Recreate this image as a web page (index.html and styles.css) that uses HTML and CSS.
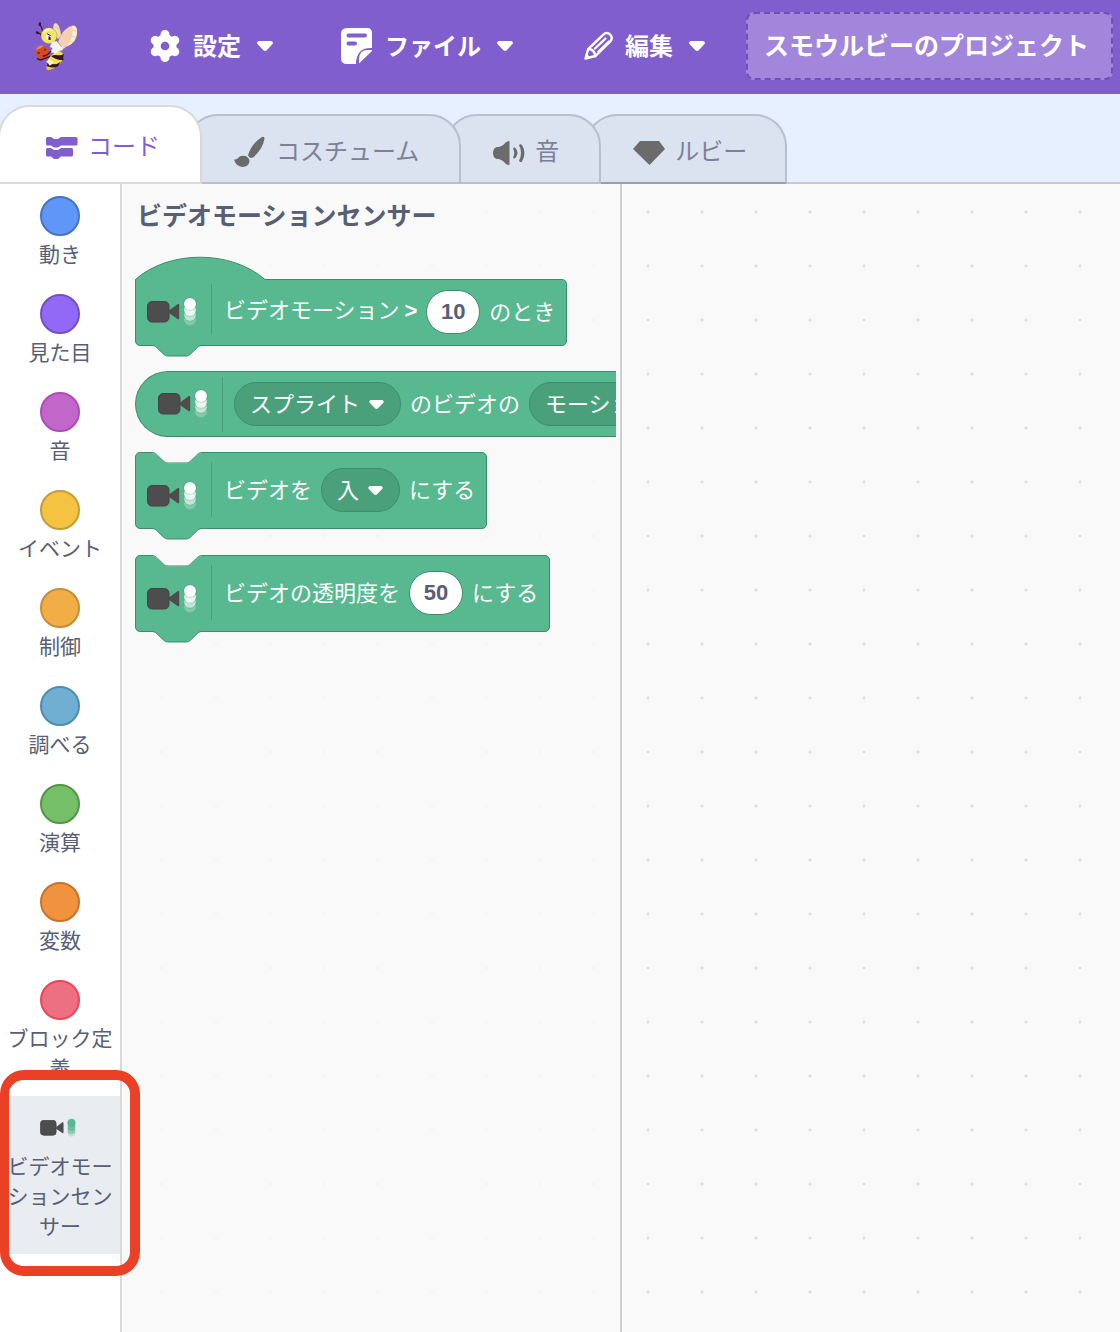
FILE: index.html
```html
<!DOCTYPE html>
<html lang="ja">
<head>
<meta charset="utf-8">
<meta name="viewport" content="width=device-width, initial-scale=1">
<title>スモウルビー</title>
<link rel="stylesheet" href="styles.css">
</head>
<body>
<svg class="defs" aria-hidden="true">
  <symbol id="caret" viewBox="0 0 16 11"><path d="M2.200 0h11.600c1.900 0 2.700 2 1.500 3.300l-5.600 5.900c-1 1-2.400 1-3.400 0L.7 3.300C-.5 2 .3 0 2.200 0z" fill="#fff"/></symbol>
  <symbol id="camera" viewBox="0 0 34 22"><rect x=".5" y=".5" width="21.500" height="20.500" rx="4.500" fill="#4d4d4d" stroke="#444"/><path d="M22 9.500l8.500-6.300c.8-.6 1.700-.1 1.700.7v13.300c0 .8-.9 1.300-1.700.7L22 12z" fill="#4d4d4d"/></symbol>
  <symbol id="trail" viewBox="0 0 14 30"><g fill="currentColor"><circle cx="7" cy="22.500" r="6" opacity=".25"/><circle cx="7" cy="18" r="6" opacity=".5"/><circle cx="7" cy="13" r="6" opacity=".75"/><circle cx="7" cy="7" r="6"/></g><g fill="none" stroke="#2f7f5e" stroke-opacity=".25" stroke-width=".8"><circle cx="7" cy="7" r="6.400"/><path d="M.8 14a6.300 6.300 0 0 0 12.400 0M.8 19a6.300 6.300 0 0 0 12.400 0"/></g></symbol>
  <symbol id="notch-top" viewBox="0 0 50 12"><path d="M0 0H50V1C47 1 46 2.400 44.600 3.700L39 9.100C37.600 10.500 36.300 11.500 34 11.500H16.500C14 11.500 12.400 10.500 11 9.100L5.400 3.700C4 2.400 3 1 0 1z" fill="#f9f9f9"/><path d="M0 .5C2.700.5 4 1.900 5.400 3.200L11 8.600C12.400 10 13.800 11 16.500 11H34C36.300 11 37.600 10 39 8.600L44.600 3.200C46 1.900 47.300.5 50 .5" fill="none" stroke="#3d8d6a"/></symbol>
  <symbol id="notch-bottom" viewBox="0 0 50 12"><path d="M0 0H50V.5C47.300.5 46 1.900 44.600 3.200L39 8.600C37.600 10 36.300 11 34 11H16.500C13.800 11 12.400 10 11 8.600L5.400 3.200C4 1.900 2.700.5 0 .5z" fill="#58b88f"/><path d="M0 .5C2.700.5 4 1.900 5.400 3.200L11 8.600C12.400 10 13.800 11 16.500 11H34C36.300 11 37.600 10 39 8.600L44.600 3.200C46 1.900 47.300.5 50 .5" fill="none" stroke="#3d8d6a"/></symbol>
</svg>

<header class="menu-bar">
  <svg class="logo" viewBox="0 0 192 192" role="img" aria-label="スモウルビー">
    <path d="M57 60Q56 42 47 32M52 64Q48 56 41 57" fill="none" stroke="#4a1d2c" stroke-width="4" stroke-linecap="round"/>
    <path d="M47 32l1-4M41 57l-2-2" stroke="#3b1422" stroke-width="7" stroke-linecap="round"/>
    <path d="M101 75C88 58 84 38 90 29C99 21 110 37 112 70z" fill="#f1dcc0" stroke="#8a6a58" stroke-width="1"/>
    <path d="M102 84C108 58 130 35 150 34C165 39 160 72 150 83L118 105z" fill="#f6cfb2" stroke="#9a7565" stroke-width="1"/>
    <path d="M144 37C158 34 162 46 157 66C151 85 141 93 128 97C143 77 149 60 144 37z" fill="#fbefd5"/>
    <path d="M145 48l13 4M143 67l13 3M137 82l10 3M89 38l18 7" stroke="#a78673" stroke-width="1"/>
    <circle cx="75" cy="65" r="24" fill="#f5e45d" stroke="#83672c" stroke-width="1"/>
    <path d="M60 48Q73 37 87 48Q72 48 60 59z" fill="#fff49a"/>
    <path d="M70 58Q82 62 82 76L71 78Q61 68 70 58z" fill="#fff"/>
    <path d="M74 66l6 4 0 8-7-1z" fill="#35131d"/>
    <path d="M69 59l11 6" stroke="#35131d" stroke-width="3"/>
    <path d="M97 112Q119 108 118 130Q111 158 73 169Q62 151 77 128z" fill="#f2dc54"/>
    <path d="M94 122Q111 127 119 119L118 139Q98 139 81 126z" fill="#351321"/>
    <path d="M70 145Q91 158 110 143L102 157Q87 164 69 157z" fill="#351321"/>
    <path d="M67 158Q83 168 91 161Q80 168 68 168z" fill="#e4c43d"/>
    <circle cx="54" cy="115" r="20" fill="#d54b23"/>
    <path d="M36 109Q38 92 60 95Q53 103 36 109z" fill="#ed8150"/>
    <circle cx="44" cy="117" r="4" fill="#8c2b1b"/><circle cx="63" cy="107" r="3" fill="#7c2419"/>
    <path d="M85 83L98 82L112 99L119 94L116 107L104 112L94 123L90 116L80 115L86 103L78 98z" fill="#f5f4ec" stroke="#ddd4cf" stroke-width="2"/>
    <path d="M80 112Q70 125 58 126M77 128L50 138L40 134" fill="none" stroke="#41151c" stroke-width="4" stroke-linecap="round"/>
    <path d="M66 143l12-8 4 6 8 1-5 8-8 5-5-7z" fill="#fff6a6"/>
  </svg>
  <nav class="menus" aria-label="メニュー">
    <button class="menu" type="button">
      <svg class="menu-icon" viewBox="0 0 32 36"><g stroke="#fff" stroke-width="9" stroke-linecap="round"><path d="M16 6.500V29.500M6.200 12.300L25.800 23.700M25.800 12.300L6.200 23.700"/></g><circle cx="16" cy="18" r="11.500" fill="#fff"/><circle cx="16" cy="18" r="4.300" fill="#805ecd"/></svg>
      <span>設定</span><svg class="caret"><use href="#caret"/></svg>
    </button>
    <button class="menu" type="button">
      <svg class="menu-icon" viewBox="0 0 32 36"><path d="M6 0H26Q31 0 31 5V20Q16 19 15 35V36H6Q0 36 0 30V6Q0 0 6 0z" fill="#fff"/><path d="M31 22V23L18 35.500V31Q18 22 27 22z" fill="#fff"/><path d="M7.500 7.500H24M7.500 15.500H14" stroke="#805ecd" stroke-width="4" stroke-linecap="round"/></svg>
      <span>ファイル</span><svg class="caret"><use href="#caret"/></svg>
    </button>
    <button class="menu" type="button">
      <svg class="menu-icon" viewBox="-1 0 32 36"><g fill="none" stroke="#fff" stroke-width="2.400" stroke-linejoin="round" stroke-linecap="round"><path d="M3.500 30.500L6.200 21L21.500 6.500Q25 3.500 28.300 6.800Q31.300 10 28.300 13.500L13.500 28z"/><path d="M6.500 21Q12 21 13.500 28M13 20.500L23.500 10.500M16.500 23.500L27 13.500M10 17.500L20 8"/></g><path d="M3 31l1.500-5.500 4 4z" fill="#fff"/></svg>
      <span>編集</span><svg class="caret"><use href="#caret"/></svg>
    </button>
  </nav>
  <input class="project-title" type="text" aria-label="プロジェクト名" value="スモウルビーのプロジェクト">
</header>

<div class="tabs" role="tablist">
  <button class="tab tab-selected" type="button" role="tab" aria-selected="true">
    <svg class="tab-icon" viewBox="0 0 32 32"><path d="M0 6.500Q0 5 1.500 5H5L8 7H12L15 5H30Q31.500 5 31.500 6.500V12Q31.500 13.500 30 13.500H15L12 15.500H8L5 13.500H1.500Q0 13.500 0 12zM0 17.500Q0 16 1.500 16H5L8 18H12L15 16H25.500Q27 16 27 17.500V23Q27 24.500 25.500 24.500H15L12 27H8L5 24.500H1.500Q0 24.500 0 23z" fill="#805ecd"/></svg>
    <span>コード</span>
  </button>
  <button class="tab" type="button" role="tab" aria-selected="false">
    <svg class="tab-icon" viewBox="0 0 32 32"><path d="M14 19.500Q17 8 28 1Q30.500 0 30.500 2.500Q29 13 19 21.500Q15.500 23 14 19.500zM0 23.500Q3 24 5 21Q7.500 19 11.500 20Q15.500 21.500 15.500 25.500Q14.500 30.500 8.500 31Q2 30.500 0 23.500z" fill="#6b6b6b"/></svg>
    <span>コスチューム</span>
  </button>
  <button class="tab" type="button" role="tab" aria-selected="false">
    <svg class="tab-icon" viewBox="0 0 32 32"><path d="M4 11H6Q11 9 12.500 6.500Q14 5 16.500 5V29Q14 29 12.500 27.500Q10 24 6 23H4Q0 22 0 17Q0 12 4 11z" fill="#6b6b6b"/><path d="M20 12.500Q21 11 22.500 12Q26.500 16.500 22.500 22Q21 23 20 21.500Q22.500 17 20 12.500zM26 9Q28 7.500 29 9Q34 17 29 25.500Q27.500 27 26 25Q30 17 26 9z" fill="#6b6b6b"/></svg>
    <span>音</span>
  </button>
  <button class="tab tab-ruby" type="button" role="tab" aria-selected="false">
    <svg class="tab-icon" viewBox="0 0 32 32"><path d="M7 5H26L32 13L16.500 29L0 13z" fill="#6b6b6b"/></svg>
    <span>ルビー</span>
  </button>
</div>

<main class="editor">
  <nav class="categories" aria-label="カテゴリー">
    <button class="category motion" type="button"><i class="bubble"></i>動き</button>
    <button class="category looks" type="button"><i class="bubble"></i>見た目</button>
    <button class="category sound" type="button"><i class="bubble"></i>音</button>
    <button class="category events" type="button"><i class="bubble"></i>イベント</button>
    <button class="category control" type="button"><i class="bubble"></i>制御</button>
    <button class="category sensing" type="button"><i class="bubble"></i>調べる</button>
    <button class="category operators" type="button"><i class="bubble"></i>演算</button>
    <button class="category variables" type="button"><i class="bubble"></i>変数</button>
    <button class="category myblocks" type="button"><i class="bubble"></i>ブロック定義</button>
    <button class="category category-selected" type="button">
      <span class="category-icon"><svg class="mini-camera"><use href="#camera"/></svg><svg class="mini-trail"><use href="#trail"/></svg></span>
      ビデオモーションセンサー
      <span class="highlight"></span>
    </button>
  </nav>

  <section class="flyout">
    <h2>ビデオモーションセンサー</h2>
    <div class="block hat">
      <svg class="hat-top" viewBox="0 0 132 24"><path d="M0 24V22.500C34-7.200 96-7.200 130 22.500L132 24z" fill="#58b88f"/><path d="M.5 24V22.500C34-7.200 96-7.200 130 22.500H132" fill="none" stroke="#3d8d6a"/></svg>
      <svg class="notch-bottom"><use href="#notch-bottom"/></svg>
      <span class="block-icon"><svg class="camera"><use href="#camera"/></svg><svg class="trail"><use href="#trail"/></svg></span>
      <label class="text" for="motion">ビデオモーション <b>&gt;</b></label>
      <input class="number" id="motion" type="text" value="10">
      <span class="text">のとき</span>
    </div>
    <div class="block reporter">
      <span class="block-icon"><svg class="camera"><use href="#camera"/></svg><svg class="trail"><use href="#trail"/></svg></span>
      <span class="dropdown"><select aria-label="対象"><option>スプライト</option></select><svg class="caret"><use href="#caret"/></svg></span>
      <span class="text">のビデオの</span>
      <span class="dropdown"><select aria-label="属性"><option>モーション</option></select><svg class="caret"><use href="#caret"/></svg></span>
    </div>
    <div class="block stack">
      <svg class="notch-top"><use href="#notch-top"/></svg>
      <svg class="notch-bottom"><use href="#notch-bottom"/></svg>
      <span class="block-icon"><svg class="camera"><use href="#camera"/></svg><svg class="trail"><use href="#trail"/></svg></span>
      <label class="text" for="state">ビデオを</label>
      <span class="dropdown"><select id="state"><option>入</option></select><svg class="caret"><use href="#caret"/></svg></span>
      <span class="text">にする</span>
    </div>
    <div class="block stack">
      <svg class="notch-top"><use href="#notch-top"/></svg>
      <svg class="notch-bottom"><use href="#notch-bottom"/></svg>
      <span class="block-icon"><svg class="camera"><use href="#camera"/></svg><svg class="trail"><use href="#trail"/></svg></span>
      <label class="text" for="alpha">ビデオの透明度を</label>
      <input class="number" id="alpha" type="text" value="50">
      <span class="text">にする</span>
    </div>
  </section>
</main>
</body>
</html>
```
FILE: styles.css
```css
* { box-sizing: border-box; }

body {
  margin: 0;
  min-height: 100vh;
  display: flex;
  flex-direction: column;
  background: #fff;
  color: #575e75;
  font-family: "Noto Sans CJK JP", "Noto Sans", sans-serif;
}

button, input, select { font: inherit; color: inherit; margin: 0; }
button { background: none; border: 0; padding: 0; cursor: pointer; }
svg { display: block; flex: none; overflow: visible; }
.defs { position: absolute; width: 0; height: 0; overflow: hidden; }

/* Menu bar */
.menu-bar {
  display: flex;
  align-items: center;
  height: 94px;
  padding: 0 7px 2px 24px;
  background: #805ecd;
  color: #fff;
}
.logo { width: 64px; height: 64px; margin-right: 27px; }
.menus { display: flex; }
.menu {
  display: flex;
  align-items: center;
  gap: 12px;
  height: 68px;
  padding: 0 34px;
  font-size: 24px;
  font-weight: 700;
}
.menu span { padding-bottom: 4px; }
.menu-icon { width: 32px; height: 36px; }
.caret { width: 16px; height: 11px; }
.menu .caret { margin-left: 4px; }
.project-title {
  flex: 1;
  min-width: 0;
  height: 68px;
  margin-left: 7px;
  padding: 0 16px 4px;
  border: 2px dashed #6f4fb8;
  border-radius: 8px;
  background: #a186db;
  font-size: 25px;
  font-weight: 700;
}

/* Tabs */
.tabs {
  display: flex;
  align-items: flex-end;
  height: 90px;
  padding-right: 16px;
  background: #e6f0ff;
  box-shadow: inset 0 -2px #c3cad5;
}
.tab {
  position: relative;
  display: flex;
  align-items: center;
  gap: 10px;
  height: 70px;
  margin-left: -16px;
  padding: 6px 40px 0 46px;
  border: 2px solid #b8c0cd;
  border-radius: 32px 32px 0 0;
  background: #dbe2f0;
  color: #7c8198;
  font-size: 24px;
}
.tab span { padding-bottom: 6px; }
.tab:nth-child(1) { z-index: 4; }
.tab:nth-child(2) { z-index: 3; }
.tab:nth-child(3) { z-index: 2; }
.tab:nth-child(4) { z-index: 1; }
.tab-selected {
  height: 79px;
  margin-left: -2px;
  background: #fff;
  border-color: #d9d9d9;
  color: #805ecd;
}
.tab-ruby { padding-right: 38px; border-bottom-color: #9aa1ae; }
.tab-icon { width: 32px; height: 32px; }

/* Editor */
.editor {
  flex: 1;
  display: flex;
  background: #f9f9f9 radial-gradient(circle, #dcdcdc 1px, transparent 2px) 135px 1px / 54px 54px;
}
.categories {
  display: flex;
  flex-direction: column;
  flex: none;
  width: 122px;
  border-right: 2px solid #d9d9d9;
  background: #fff;
}
.category {
  position: relative;
  display: block;
  padding: 12px 4px 14px;
  font-size: 21px;
  line-height: 30px;
  text-align: center;
}
.category-selected { background: #e9edf2; }
.bubble {
  display: block;
  width: 40px;
  height: 40px;
  margin: 0 auto 2px;
  border: 2px solid;
  border-radius: 50%;
}
.motion .bubble { background: #5f96f7; border-color: #4473c5; }
.looks .bubble { background: #9269f7; border-color: #7250c4; }
.sound .bubble { background: #c167c9; border-color: #b04bb9; }
.events .bubble { background: #f4c342; border-color: #c69c36; }
.control .bubble { background: #f2ae46; border-color: #c68d38; }
.sensing .bubble { background: #70aed2; border-color: #4b8cb8; }
.operators .bubble { background: #75bf68; border-color: #519645; }
.variables .bubble { background: #f0923e; border-color: #cb7229; }
.myblocks .bubble { background: #ec6f82; border-color: #ea4658; }
.category-icon {
  display: flex;
  align-items: center;
  gap: 2px;
  height: 40px;
  margin: 0 36px 2px;
}
.mini-camera { width: 25px; height: 16px; }
.mini-trail { width: 9px; height: 20px; color: #58b88f; }
.highlight {
  position: absolute;
  z-index: 5;
  inset: -26px -20px -22px 0;
  border: 10px solid #eb4026;
  border-left-width: 9px;
  border-radius: 24px;
  pointer-events: none;
}

/* Block palette */
.flyout {
  flex: none;
  width: 500px;
  padding: 15px 4px 16px 13px;
  border-right: 2px solid #d0d0d0;
  background: rgba(249, 249, 249, .8);
  overflow: hidden;
}
.flyout h2 {
  margin: 0 0 50px;
  padding-left: 2px;
  font-size: 25px;
  line-height: 30px;
  font-weight: 700;
}
.block {
  position: relative;
  display: flex;
  align-items: center;
  gap: 9px;
  width: max-content;
  height: 77px;
  margin-bottom: 26px;
  padding: 0 11px 2px;
  border: 1px solid #3d8d6a;
  border-radius: 5px;
  background: #58b88f;
  color: #fff;
  font-size: 22px;
  line-height: 30px;
  white-space: nowrap;
}
.hat { height: 67px; margin-bottom: 25px; border-top-left-radius: 0; }
.reporter {
  width: auto;
  height: 66px;
  margin-bottom: 15px;
  padding: 0 0 0 22px;
  border-right: 0;
  border-radius: 33px 0 0 33px;
  overflow: hidden;
}
.text { padding-bottom: 4px; }
.text b { font-family: "Liberation Sans", Arial, sans-serif; }
.hat-top { position: absolute; left: -1px; top: -23px; width: 132px; height: 24px; }
.notch-top { position: absolute; left: 16px; top: -1px; width: 50px; height: 12px; }
.notch-bottom { position: absolute; left: 16px; bottom: -12px; width: 50px; height: 12px; }
.block-icon {
  display: flex;
  align-items: center;
  gap: 2px;
  height: 55px;
  margin-right: 3px;
  padding-right: 14px;
  border-right: 1px solid #4aa07b;
}
.hat .block-icon { height: 50px; margin-bottom: 5px; }
.hat .block-icon > svg { margin-top: 5px; }
.stack .block-icon > svg { margin-top: 12px; }
.camera { width: 34px; height: 22px; }
.trail { width: 14px; height: 30px; }
.reporter .block-icon { margin-right: 2px; }
.number {
  width: 54px;
  height: 44px;
  padding: 0;
  border: 1px solid #3d8d6a;
  border-radius: 22px;
  background: #fff;
  color: #575e75;
  font-family: "Liberation Sans", Arial, sans-serif;
  font-weight: 700;
  text-align: center;
}
.dropdown { position: relative; flex: none; }
.dropdown select {
  display: block;
  height: 44px;
  padding: 0 39px 4px 15px;
  border: 1px solid #3d8d6a;
  border-radius: 22px;
  background: #4aa07b;
  appearance: none;
}
.dropdown .caret { position: absolute; right: 17px; top: 18px; width: 15px; height: 10px; pointer-events: none; }
```
